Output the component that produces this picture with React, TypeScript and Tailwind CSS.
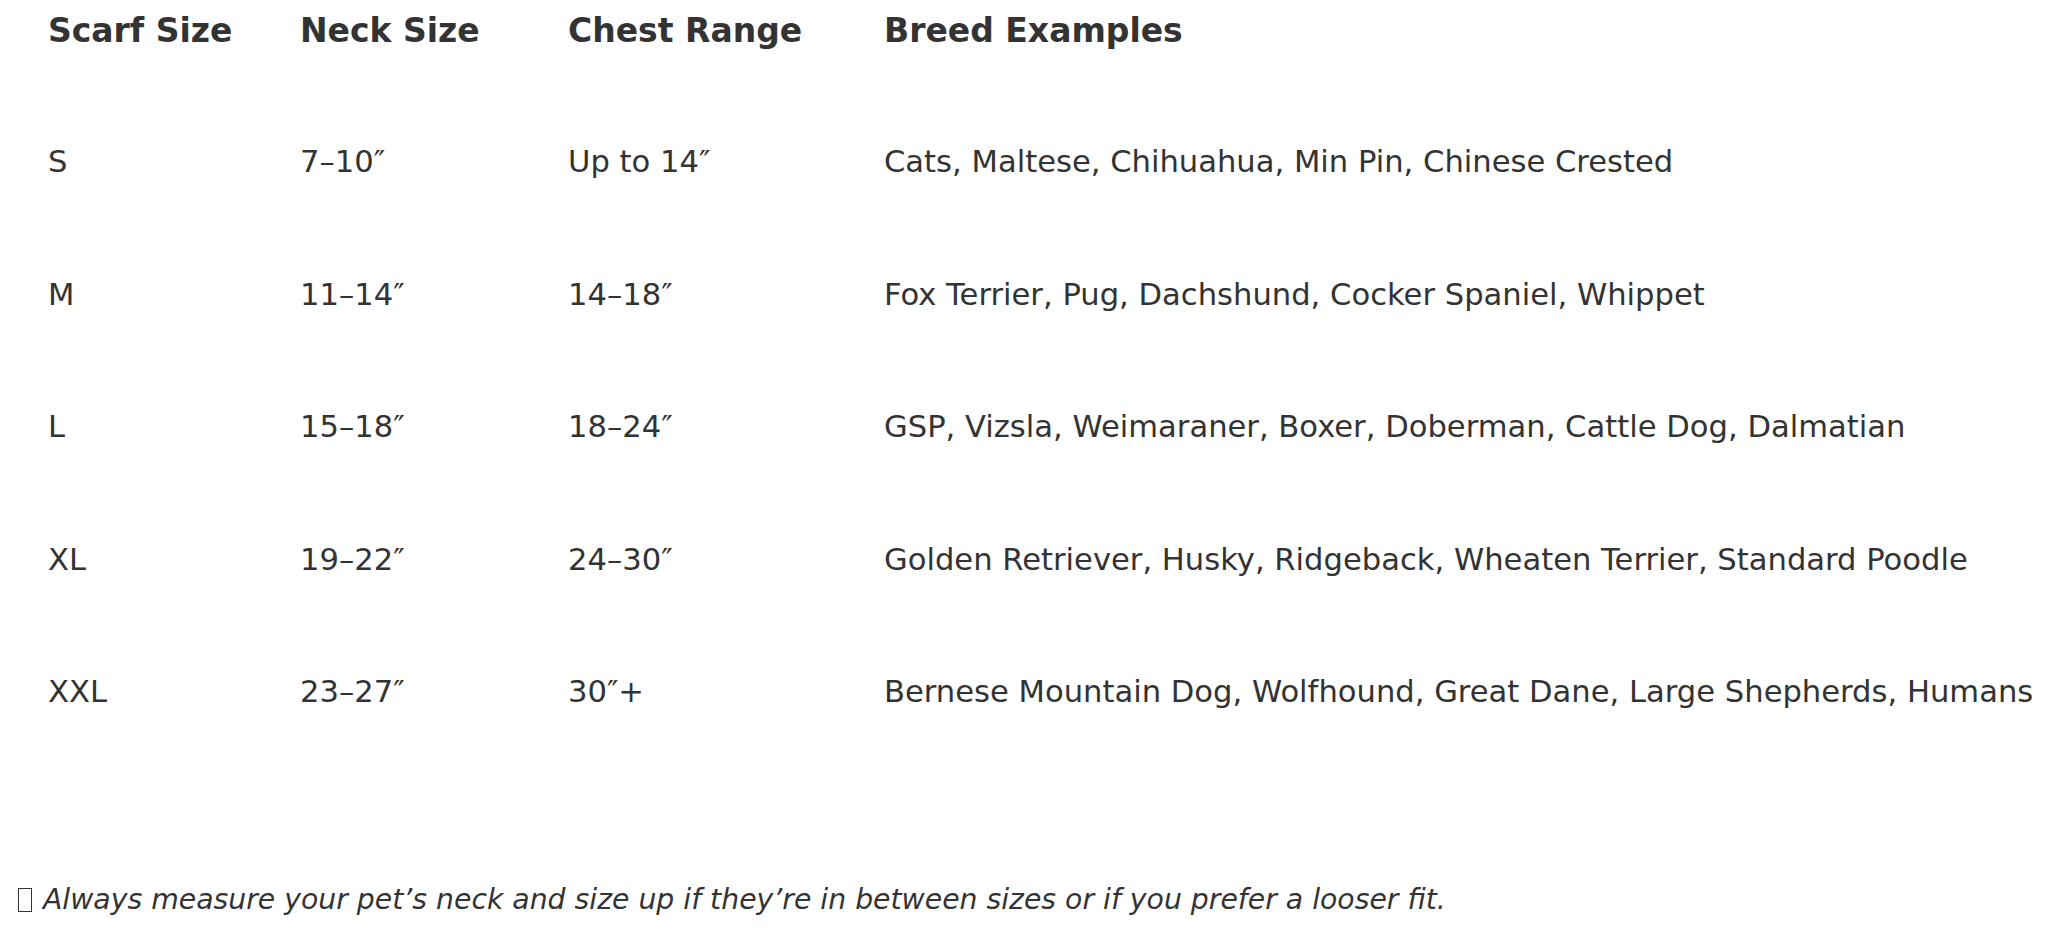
import React from "react";

const rows = [
  ["S", "7–10″", "Up to 14″", "Cats, Maltese, Chihuahua, Min Pin, Chinese Crested"],
  ["M", "11–14″", "14–18″", "Fox Terrier, Pug, Dachshund, Cocker Spaniel, Whippet"],
  ["L", "15–18″", "18–24″", "GSP, Vizsla, Weimaraner, Boxer, Doberman, Cattle Dog, Dalmatian"],
  ["XL", "19–22″", "24–30″", "Golden Retriever, Husky, Ridgeback, Wheaten Terrier, Standard Poodle"],
  ["XXL", "23–27″", "30″+", "Bernese Mountain Dog, Wolfhound, Great Dane, Large Shepherds, Humans"],
];

export default function App() {
  return (
    <div className="min-h-[930px] bg-white text-[#333333] font-['DejaVu_Sans',sans-serif]">
      <div className="pl-[48px]">
        <div className="grid grid-cols-[252px_268px_316px_1fr] text-[33px] leading-[38px] font-bold pt-[12px] pb-[46px] whitespace-nowrap">
          <div>Scarf Size</div>
          <div>Neck Size</div>
          <div>Chest Range</div>
          <div>Breed Examples</div>
        </div>
        {rows.map((r) => (
          <div
            key={r[0]}
            className="grid grid-cols-[252px_268px_316px_1fr] text-[30.6px] leading-[38px] py-[47.25px] whitespace-nowrap"
          >
            <div>{r[0]}</div>
            <div>{r[1]}</div>
            <div>{r[2]}</div>
            <div>{r[3]}</div>
          </div>
        ))}
      </div>
      <div className="pl-[18px] pt-[125px] text-[28.3px] leading-[32px] italic whitespace-nowrap flex items-center">
        <span className="inline-block w-[14px] h-[24px] border-[1.5px] border-[#333333] mr-[11px]" />
        <span>Always measure your pet’s neck and size up if they’re in between sizes or if you prefer a looser fit.</span>
      </div>
    </div>
  );
}
